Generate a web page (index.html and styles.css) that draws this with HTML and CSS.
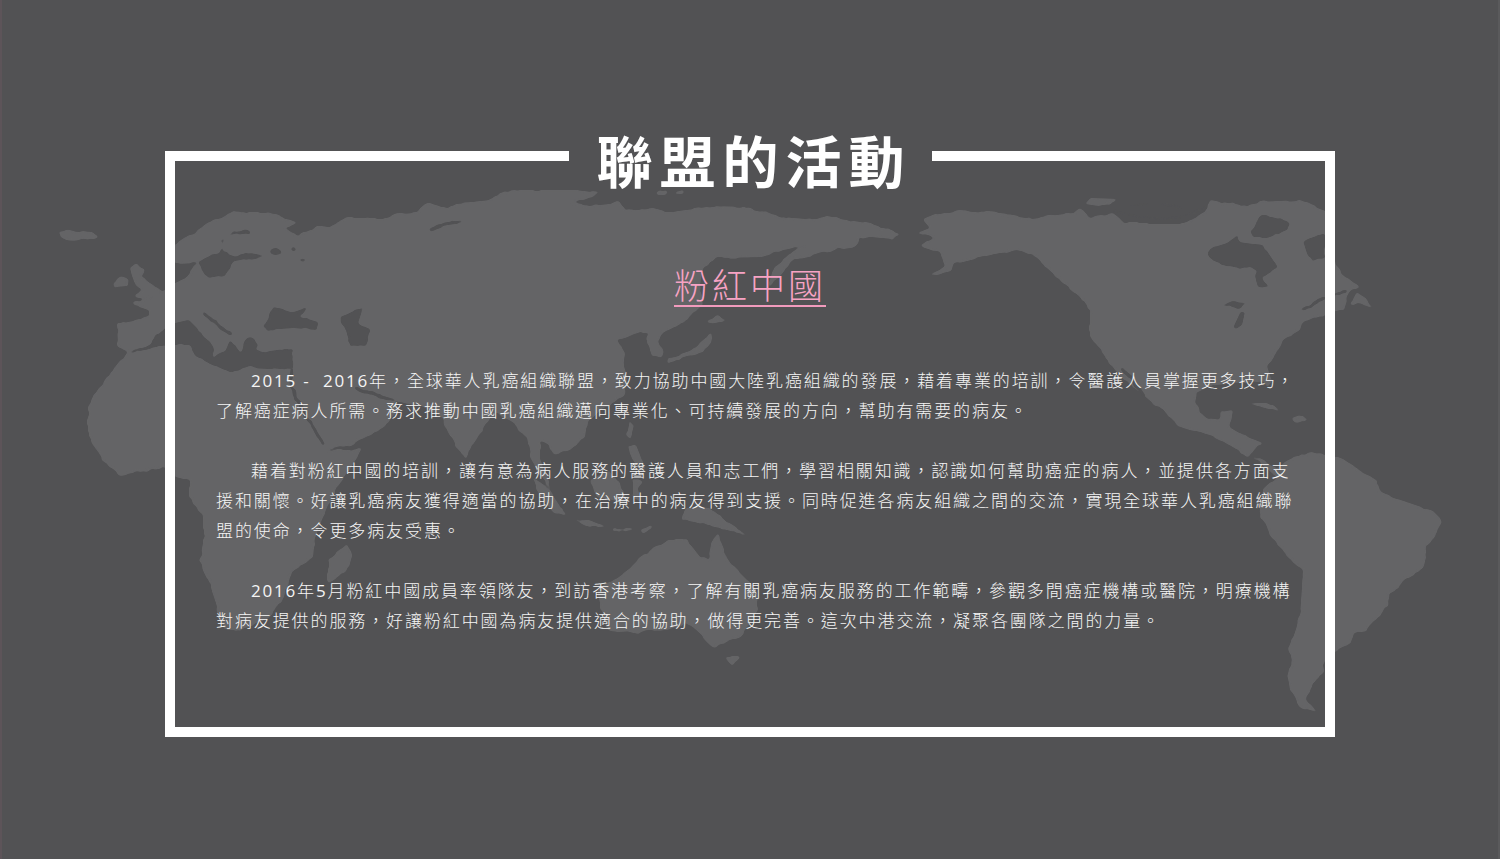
FILE: index.html
```html
<!DOCTYPE html>
<html lang="zh-Hant">
<head>
<meta charset="utf-8">
<title>聯盟的活動</title>
<link rel="stylesheet" href="styles.css">
</head>
<body>
<svg class="map" viewBox="0 0 1500 859" aria-hidden="true">
  <defs>
    <filter id="coast" x="0" y="0" width="100%" height="100%" color-interpolation-filters="sRGB">
      <feTurbulence type="fractalNoise" baseFrequency="0.07" numOctaves="3" seed="4" result="noise"/>
      <feDisplacementMap in="SourceGraphic" in2="noise" scale="5" xChannelSelector="R" yChannelSelector="G" result="moved"/>
      <feGaussianBlur in="moved" stdDeviation="0.8"/>
      <feComponentTransfer>
        <feFuncA type="linear" slope="4" intercept="-1.5"/>
      </feComponentTransfer>
    </filter>
  </defs>
  <g class="land" filter="url(#coast)">
    <path d="M58,232 Q70,229 92,232 L98,236 Q90,240 80,240 Q70,242 65,239 Z"/>
    <path d="M113,284 L120,277 L130,280 L127,287 L115,288 Z"/>
    <path d="M130,268 L137,262 L145,270 L140,277 L150,283 L163,293 L160,297 L145,299 L135,297 L142,290 L135,283 L132,275 Z"/>
    <path d="M128,352 L118,345 L117,323 L135,320 L148,317 L148,310 L140,307 L133,302 L150,298 L163,292 L175,283 L187,278 L192,268 L197,262 L175,263 L168,255 L175,245 L190,235 L213,220 L230,213 L247,212 L267,212 L283,217 L300,222 L285,228 L297,236 L317,227 L330,226 L347,218 L387,218 L400,213 L417,212 L425,205 L430,203 L440,206 L447,208 L455,203 L473,202 L490,200 L500,193 L520,190 L550,190 L575,190 L600,193 L590,198 L573,203 L590,205 L620,202 L625,210 L650,208 L663,212 L673,212 L707,207 L750,208 L783,217 L805,219 L827,217 L867,223 L900,233 L893,240 L860,237 L857,247 L823,252 L793,260 L781,275 L768,288 L772,272 L790,253 L805,245 L783,250 L763,257 L717,258 L703,268 L700,285 L703,305 L690,315 L683,322 L660,335 L658,342 L665,352 L663,358 L652,355 L647,340 L648,333 L637,333 L625,338 L617,340 L625,353 L623,367 L628,377 L623,397 L600,410 L587,422 L585,437 L570,450 L555,455 L548,445 L540,440 L540,460 L548,480 L553,492 L540,475 L530,455 L527,437 L515,425 L505,420 L497,412 L485,425 L470,450 L466,460 L455,445 L445,425 L443,418 L425,407 L405,403 L395,402 L400,410 L380,430 L350,445 L327,450 L345,450 L362,449 L350,470 L335,490 L315,537 L313,557 L293,570 L283,597 L270,617 L240,630 L223,630 L213,593 L200,560 L203,543 L203,517 L190,497 L190,480 L175,477 L165,468 L120,475 L103,460 L88,437 L88,407 L100,387 Z"/>
    <path d="M347,543 L352,555 L345,573 L328,583 L328,560 Z"/>
    <path d="M533,477 L548,488 L567,517 L555,513 L540,497 Z"/>
    <path d="M572,518 L590,520 L607,527 L590,527 Z"/>
    <path d="M590,480 L608,472 L620,480 L627,503 L597,497 Z"/>
    <path d="M633,480 L643,482 L638,490 L642,502 L633,498 Z"/>
    <path d="M613,528 L632,528 L632,530 L613,531 Z"/>
    <path d="M640,530 L652,525 L652,528 L643,533 Z"/>
    <path d="M687,507 L710,508 L725,520 L747,535 L715,527 L695,522 L680,520 Z"/>
    <path d="M630,420 L634,425 L632,440 L627,435 Z"/>
    <path d="M628,445 L636,445 L640,455 L645,470 L636,465 L630,455 Z"/>
    <path d="M668,540 L687,540 L700,557 L708,560 L712,540 L717,533 L730,563 L757,590 L758,610 L740,637 L713,647 L703,637 L687,623 L667,630 L617,633 L607,630 L600,603 L597,590 L627,570 L640,557 L657,547 Z"/>
    <path d="M725,657 L740,657 L732,667 Z"/>
    <path d="M707,322 L717,315 L727,320 L716,324 Z"/>
    <path d="M713,332 L711,343 L703,352 L680,358 L667,365 L668,359 L690,352 L703,340 Z"/>
    <ellipse cx="662" cy="193" rx="6" ry="2"/>
    <ellipse cx="680" cy="193" rx="4" ry="2"/>
    <path d="M923,220 L935,215 L960,210 L1000,213 L1033,218 L1073,213 L1080,208 L1090,217 L1113,213 L1125,223 L1187,223 L1207,210 L1210,200 L1240,205 L1260,202 L1300,200 L1325,210 L1335,267 L1360,287 L1350,292 L1347,297 L1343,310 L1335,312 L1325,315 L1302,323 L1300,330 L1283,340 L1278,350 L1273,357 L1267,367 L1272,380 L1268,387 L1263,380 L1247,383 L1213,385 L1197,393 L1195,403 L1200,413 L1217,420 L1220,412 L1233,410 L1230,427 L1247,437 L1263,443 L1255,450 L1247,457 L1233,447 L1213,437 L1180,427 L1163,410 L1147,400 L1125,380 L1107,360 L1090,337 L1090,313 L1080,297 L1057,277 L1033,255 L1017,250 L1000,253 L975,258 L955,263 L950,272 L930,277 L945,265 L940,253 L920,245 L935,238 L917,233 L930,228 Z"/>
    <path d="M1085,205 L1090,198 L1120,199 L1100,207 Z"/>
    <path d="M1357,292 L1365,297 L1372,307 L1358,304 L1349,306 Z"/>
    <path d="M1247,403 L1267,403 L1283,413 L1265,408 Z"/>
    <path d="M1290,417 L1298,415 L1308,420 L1293,422 Z"/>
    <path d="M1250,455 L1265,462 L1277,467 L1293,457 L1313,453 L1335,457 L1343,460 L1377,480 L1380,493 L1430,510 L1442,522 L1427,547 L1423,567 L1390,593 L1387,607 L1367,630 L1353,633 L1350,643 L1335,650 L1325,660 L1323,673 L1310,687 L1307,700 L1317,712 L1300,707 L1290,690 L1288,677 L1293,660 L1290,647 L1300,617 L1303,570 L1283,553 L1260,517 L1263,490 L1277,477 Z"/>
  </g>
  <g class="water" filter="url(#coast)">
    <path d="M130,351 L150,345 L155,335 L163,330 L175,323 L188,320 L195,327 L205,338 L213,346 L213,358 L225,352 L230,340 L240,352 L245,340 L252,337 L258,345 L256,350 L270,352 L293,349 L292,370 L270,368 L247,367 L230,372 L197,357 L190,345 L175,345 L150,349 L132,353 Z"/>
    <path d="M263,327 L273,308 L293,312 L307,307 L300,317 L317,322 L317,330 L293,328 L267,330 Z"/>
    <path d="M340,317 L363,308 L358,323 L370,330 L365,347 L350,345 L347,333 Z"/>
    <path d="M197,262 L205,275 L208,278 L225,275 L235,262 L255,258 L265,256 L247,252 L235,257 L222,250 L222,240 L235,235 L252,233 L250,230 L235,232 L225,240 L218,252 Z"/>
    <ellipse cx="276" cy="251" rx="6" ry="3"/>
    <ellipse cx="293" cy="248" rx="3" ry="2"/>
    <ellipse cx="303" cy="260" rx="3" ry="1.5"/>
    <path d="M1207,253 L1213,247 L1227,243 L1238,235 L1238,242 L1263,245 L1273,260 L1277,268 L1262,277 L1268,288 L1258,287 L1255,277 L1257,270 L1233,267 L1210,260 Z"/>
    <path d="M1250,230 L1263,215 L1290,222 L1287,230 L1267,237 L1253,237 Z"/>
    <path d="M1303,243 L1325,232 L1325,258 L1312,262 Z"/>
    <path d="M1217,307 L1230,302 L1247,303 L1238,308 L1225,306 Z"/>
    <path d="M1233,327 L1240,312 L1245,312 L1242,325 L1236,329 Z"/>
  </g>
  <g class="channel" filter="url(#coast)">
    <polyline points="1113,211 1140,217 1180,218 1205,207"/>
    <polyline points="1130,205 1160,203 1180,208"/>
    <polyline points="291,370 290,385 305,415 325,445"/>
    <polyline points="355,388 375,395 395,401"/>
    <polyline points="203,313 215,322 230,335"/>
    <polyline points="430,230 445,224 460,222"/>
    <polyline points="1122,368 1132,380 1143,397"/>
    <polyline points="1302,310 1325,297 1347,292"/>
  </g>
</svg>

<main class="frame">
  <header class="frame-head">
    <span class="rule"></span>
    <h1 class="title">聯盟的活動</h1>
    <span class="rule"></span>
  </header>
  <section class="frame-body">
    <h2 class="subtitle"><span class="subtitle-text">粉紅中國</span></h2>
    <p class="para"><span class="num">2015 -&nbsp; 2016</span>年，全球華人乳癌組織聯盟，致力協助中國大陸乳癌組織的發展，藉着專業的培訓，令醫護人員掌握更多技巧，<br>了解癌症病人所需。務求推動中國乳癌組織邁向專業化、可持續發展的方向，幫助有需要的病友。</p>
    <p class="para">藉着對粉紅中國的培訓，讓有意為病人服務的醫護人員和志工們，學習相關知識，認識如何幫助癌症的病人，並提供各方面支<br>援和關懷。好讓乳癌病友獲得適當的協助，在治療中的病友得到支援。同時促進各病友組織之間的交流，實現全球華人乳癌組織聯<br>盟的使命，令更多病友受惠。</p>
    <p class="para"><span class="num">2016</span>年<span class="num">5</span>月粉紅中國成員率領隊友，到訪香港考察，了解有關乳癌病友服務的工作範疇，參觀多間癌症機構或醫院，明療機構<br>對病友提供的服務，好讓粉紅中國為病友提供適合的協助，做得更完善。這次中港交流，凝聚各團隊之間的力量。</p>
  </section>
</main>
</body>
</html>
```

FILE: styles.css
```css
* { box-sizing: border-box; }

html, body { height: 100%; }

body {
  margin: 0;
  overflow: hidden;
  background: #525254;
  border-left: 2px solid #5d5459;
  border-right: 2px solid #5a5a5c;
  font-family: "Open Sans", "Noto Sans CJK TC", sans-serif;
  color: #f5f5f5;
}

.map {
  position: absolute;
  left: 0;
  top: 0;
  width: 1500px;
  height: 859px;
}

.land path, .land ellipse {
  fill: #646466;
}

.water path, .water ellipse {
  fill: #525254;
}

.channel polyline {
  fill: none;
  stroke: #525254;
  stroke-width: 3;
  stroke-linecap: round;
  stroke-linejoin: round;
}

.frame {
  position: relative;
  margin: 129px 163px 0;
  width: 1170px;
}

.frame-head {
  display: flex;
  align-items: flex-start;
  height: 32px;
}

.rule {
  flex: 1;
  height: 10px;
  margin-top: 22px;
  background: #fff;
}

.title {
  margin: 0;
  padding: 0 20px 0 28px;
  height: 64px;
  font-size: 56px;
  line-height: 64px;
  font-weight: 700;
  letter-spacing: 7px;
  color: #fff;
  white-space: nowrap;
}

.frame-body {
  height: 576px;
  padding: 106px 20px 0 41px;
  border: 10px solid #fff;
  border-top: 0;
}

.subtitle {
  margin: 0 0 59px;
  text-align: center;
  padding-right: 21px;
  font-size: 35px;
  line-height: 38px;
  font-weight: 300;
  letter-spacing: 3px;
  color: #f7a3c4;
}

.subtitle-text {
  display: inline-block;
  border-bottom: 2px solid #f29bbd;
}

.para {
  margin: 0 0 30px;
  font-size: 17px;
  line-height: 30px;
  font-weight: 300;
  letter-spacing: 1.9px;
  text-indent: 35px;
  white-space: nowrap;
}

.num {
  font-size: 17px;
  font-weight: 400;
  line-height: 1;
  letter-spacing: 1.8px;
}
```
